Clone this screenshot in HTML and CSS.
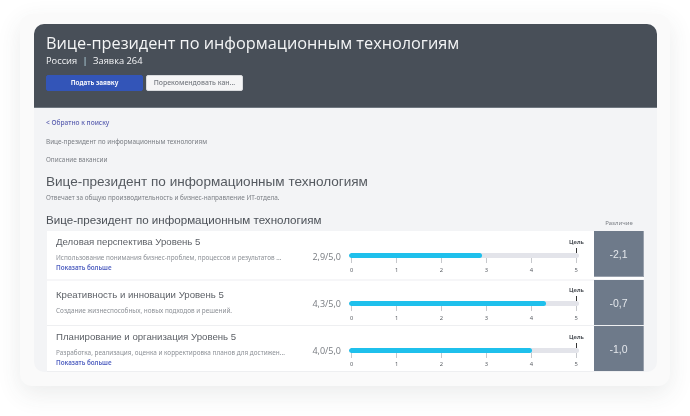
FILE: index.html
```html
<!DOCTYPE html>
<html lang="ru">
<head>
<meta charset="utf-8">
<title>Вице-президент по информационным технологиям</title>
<link rel="stylesheet" href="styles.css">
</head>
<body>
<div class="card">
  <main class="panel">
    <header class="hero">
      <h1 class="hero-title">Вице-президент по информационным технологиям</h1>
      <p class="hero-meta">Россия <span class="sep">|</span> Заявка 264</p>
      <div class="actions">
        <button class="btn btn-primary">Подать заявку</button>
        <button class="btn btn-secondary">Порекомендовать кан...</button>
      </div>
    </header>
    <section class="content">
      <a class="back">&lt; Обратно к поиску</a>
      <p class="crumb crumb-first">Вице-президент по информационным технологиям</p>
      <p class="crumb crumb-second">Описание вакансии</p>
      <h2 class="job-title">Вице-президент по информационным технологиям</h2>
      <p class="job-desc">Отвечает за общую производительность и бизнес-направление ИТ-отдела.</p>
      <div class="table-head">
        <h3 class="table-title">Вице-президент по информационным технологиям</h3>
        <span class="diff-label">Различие</span>
      </div>
      <div class="rows">
        <article class="row row-a">
          <div class="info">
            <h4 class="skill">Деловая перспектива Уровень 5</h4>
            <p class="skill-desc">Использование понимания бизнес-проблем, процессов и результатов ...</p>
            <a class="more">Показать больше</a>
          </div>
          <div class="score">2,9/5,0</div>
          <div class="chart">
            <div class="goal">Цель</div>
            <div class="goal-mark"></div>
            <div class="track"><div class="fill" style="width:57.8%"></div></div>
            <div class="ticks"><i></i><i></i><i></i><i></i><i></i><i></i></div>
            <div class="scale"><span>0</span><span>1</span><span>2</span><span>3</span><span>4</span><span>5</span></div>
          </div>
          <div class="diff diff-a">-2,1</div>
        </article>
        <article class="row row-b">
          <div class="info">
            <h4 class="skill">Креативность и инновации Уровень 5</h4>
            <p class="skill-desc">Создание жизнеспособных, новых подходов и решений.</p>
          </div>
          <div class="score">4,3/5,0</div>
          <div class="chart">
            <div class="goal">Цель</div>
            <div class="goal-mark"></div>
            <div class="track"><div class="fill" style="width:85.5%"></div></div>
            <div class="ticks"><i></i><i></i><i></i><i></i><i></i><i></i></div>
            <div class="scale"><span>0</span><span>1</span><span>2</span><span>3</span><span>4</span><span>5</span></div>
          </div>
          <div class="diff diff-b">-0,7</div>
        </article>
        <article class="row row-c">
          <div class="info">
            <h4 class="skill">Планирование и организация Уровень 5</h4>
            <p class="skill-desc">Разработка, реализация, оценка и корректировка планов для достижен...</p>
            <a class="more">Показать больше</a>
          </div>
          <div class="score">4,0/5,0</div>
          <div class="chart">
            <div class="goal">Цель</div>
            <div class="goal-mark"></div>
            <div class="track"><div class="fill" style="width:79.6%"></div></div>
            <div class="ticks"><i></i><i></i><i></i><i></i><i></i><i></i></div>
            <div class="scale"><span>0</span><span>1</span><span>2</span><span>3</span><span>4</span><span>5</span></div>
          </div>
          <div class="diff diff-c">-1,0</div>
        </article>
      </div>
    </section>
  </main>
</div>
</body>
</html>
```
FILE: styles.css
```css
* { box-sizing: border-box; }
html, body { margin: 0; height: 416px; overflow: hidden; background: #fff; }
body { padding: 14px 20px 30px; font-family: "Liberation Sans", sans-serif; }
h1, h2, h3, h4, p { margin: 0; font-weight: 400; }

.card {
  width: 650px; height: 372px; padding: 10px 13px 14px 14px;
  background: #fafafa; border-radius: 12px;
  box-shadow: 0 8px 24px rgba(60, 64, 72, .10);
}
.panel {
  height: 348px; background: #f3f4f6; border-radius: 10px; overflow: hidden;
  display: flex; flex-direction: column; filter: blur(.3px);
}
.hero { height: 84px; flex: none; background: #484f58; border-bottom: 1px solid #6f7780; padding: 7px 12px 0; color: #fff; }
.hero-title { font: 16.3px/24px "Open Sans", sans-serif; color: #f4f5f6; }
.hero-meta { font: 9.3px/14px "Open Sans", sans-serif; color: #f4f5f7; margin-top: -1px; }
.sep { margin: 0 3px; color: #bfe3ee; }
.actions { display: flex; gap: 3px; margin-top: 7px; }
.btn { height: 16px; width: 97px; padding: 0; border-radius: 2px; font: 700 6.4px/14px "Noto Sans", sans-serif; }
.btn-primary { background: #3355b8; border: 1px solid #3355b8; color: #f2f4fb; }
.btn-secondary { background: #f5f5f6; border: 1px solid #d9dbde; color: #767a80; font-weight: 500; font-size: 6.9px; }

.content { flex: 1; padding: 0 13px 0 12px; display: flex; flex-direction: column; min-height: 0; }
.back { font: 500 6.6px/10px "Noto Sans", sans-serif; color: #5a5fb0; margin-top: 9.5px; }
.crumb { font: 6.4px/10px "Noto Sans", sans-serif; color: #7a7e84; }
.crumb-first { margin-top: 9.5px; }
.crumb-second { margin-top: 8px; }
.job-title { font-size: 13.55px; line-height: 18px; color: #555a60; margin-top: 8px; }
.job-desc { font: 6.4px/10px "Noto Sans", sans-serif; color: #7a7e84; margin-top: 2px; }
.table-head { display: flex; justify-content: space-between; align-items: flex-end; height: 18px; margin-top: 10px; }
.table-title { font-size: 11.6px; line-height: 15px; color: #4c5158; margin-bottom: 4px; }
.diff-label { width: 50px; text-align: center; font: 6px/9px "Noto Sans", sans-serif; color: #7d8187; margin-bottom: 3.5px; }

.rows { display: flex; flex-direction: column; margin-left: 1px; }
.row { display: flex; background: #fff; }
.row-a { height: 49px; box-shadow: inset 0 -1px 0 #f6f6f8; }
.row-b { height: 46px; box-shadow: inset 0 1px 0 #f6f6f8, inset 0 -1px 0 #eeeff1; }
.row-c { height: 46px; box-shadow: inset 0 -1px 0 #eeeff1; }
.info { width: 259px; padding: 4px 0 0 9px; flex: none; }
.row-b .info { padding-top: 8px; }
.skill { font-size: 9.65px; line-height: 14px; color: #5d6167; }
.skill-desc { font: 6.4px/10px "Noto Sans", sans-serif; color: #8c9096; margin-top: 4px; white-space: nowrap; }
.more { display: block; font: 600 6.3px/10px "Noto Sans", sans-serif; color: #4f5fc0; margin-top: .4px; }
.score { width: 35px; flex: none; text-align: right; padding: 18px 0 0 0; font: 9px/16px "Open Sans", sans-serif; color: #777b80; white-space: nowrap; }
.row-b .score { padding-top: 16px; }
.row-c .score { padding-top: 17px; }
.chart { width: 253px; flex: none; padding: 7px 15px 0 8px; display: flex; flex-direction: column; }
.row-b .chart { padding-top: 6px; }
.row-c .chart { padding-top: 6.5px; }
.goal { font: 700 5.8px/8px "Noto Sans", sans-serif; color: #50545a; text-align: right; margin-right: -5px; }
.goal-mark { align-self: flex-end; width: 1px; height: 5px; margin-right: 2px; background: #333; margin-top: 2px; }
.track { height: 5px; background: #e3e4ea; border-radius: 3px; overflow: hidden; }
.fill { height: 100%; background: #1fc0ec; border-radius: 3px; }
.ticks { display: flex; justify-content: space-between; padding: 0 2px; }
.ticks i { display: block; width: 1px; height: 5px; background: #c6c8cc; }
.scale { display: flex; justify-content: space-between; font: 5.8px/8px "Noto Sans", sans-serif; color: #5c6066; padding: 0 1px; margin-top: 2.5px; }
.diff { width: 50px; flex: none; background: #6e7a8a; color: #e4e7ec; font-size: 10.5px; display: flex; align-items: center; justify-content: center; border-right: 1px solid #98a0ac; }
.diff-a { height: 46px; border-bottom: 1px solid #98a0ac; }
.diff-b { height: 45px; }
.diff-c { height: 45px; }
```
